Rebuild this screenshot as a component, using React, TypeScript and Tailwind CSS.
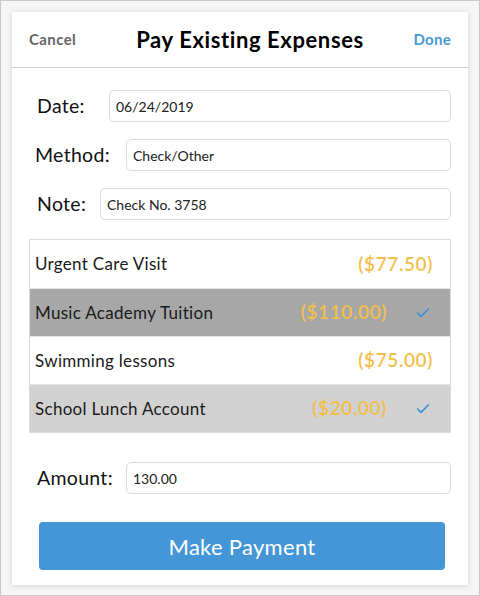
import { Check } from 'lucide-react'

type Expense = {
  name: string
  amount: string
  selected: boolean
  tone: string
}

const expenses: Expense[] = [
  { name: 'Urgent Care Visit', amount: '($77.50)', selected: false, tone: 'bg-white' },
  { name: 'Music Academy Tuition', amount: '($110.00)', selected: true, tone: 'bg-[#a7a7a7]' },
  { name: 'Swimming lessons', amount: '($75.00)', selected: false, tone: 'bg-white' },
  { name: 'School Lunch Account', amount: '($20.00)', selected: true, tone: 'bg-[#d1d1d1]' },
]

// labelBox sets where the input begins, as in the source each row differs a bit
function Field({ label, value, labelBox }: { label: string, value: string, labelBox: string }) {
  return (
    <div className="flex items-center">
      <span className={`shrink-0 text-[19.5px] tracking-[0.3px] text-[#111] ${labelBox}`}>{label}</span>
      <div className="flex h-[32px] flex-1 items-center rounded-[5px] border border-[#dcdcdc] bg-white px-[6px] text-[14px] text-[#222]">
        {value}
      </div>
    </div>
  )
}

export default function App() {
  return (
    <div className="h-[596px] w-[480px] border border-[#c9c9c9] bg-[#f6f6f6] p-[11px] font-['Lato','Noto_Sans',sans-serif]">
      <div className="flex h-[573px] flex-col bg-white shadow-[0_1px_6px_rgba(0,0,0,0.15)]">
        <div className="flex h-[56px] items-center justify-between border-b border-[#cfcfcf] px-[17px]">
          <span className="w-[80px] text-[15px] font-bold tracking-[0.4px] text-[#666]">Cancel</span>
          <span className="text-[22px] font-bold tracking-[0.6px] text-black">Pay Existing Expenses</span>
          <span className="w-[60px] text-right text-[15px] font-bold tracking-[0.3px] text-[#4a9ad8]">Done</span>
        </div>

        <div className="flex flex-col gap-[17px] pr-[17px] pt-[22px]">
          <Field label="Date:" value="06/24/2019" labelBox="ml-[25px] w-[72px]" />
          <Field label="Method:" value="Check/Other" labelBox="ml-[23px] w-[91px]" />
          <Field label="Note:" value="Check No. 3758" labelBox="ml-[25px] w-[63px]" />
        </div>

        <div className="mx-[17px] mt-[19px] border border-[#dcdcdc]">
          {expenses.map((item, i) => (
            <div
              key={item.name}
              className={`flex h-[48px] items-center pl-[5px] pr-[17px] ${item.tone} ${i > 0 ? 'border-t border-[#e4e4e4]' : ''}`}
            >
              <span className="flex-1 text-[17px] tracking-[0.3px] text-[#1a1a1a]">{item.name}</span>
              <span className="text-[19px] font-semibold tracking-[0.6px] text-[#f2c04a]">{item.amount}</span>
              {item.selected && (
                <span className="ml-[26px] flex w-[20px] justify-center">
                  <Check size={16} strokeWidth={2.5} color="#3f8fd6" />
                </span>
              )}
            </div>
          ))}
        </div>

        <div className="pr-[17px] pt-[29px]">
          <Field label="Amount:" value="130.00" labelBox="ml-[25px] w-[89px]" />
        </div>

        <div className="pl-[27px] pr-[23px] pt-[28px]">
          <button className="flex h-[48px] w-full items-center justify-center rounded-[4px] bg-[#4496d6] text-[22px] tracking-[0.3px] text-white">
            Make Payment
          </button>
        </div>
      </div>
    </div>
  )
}
